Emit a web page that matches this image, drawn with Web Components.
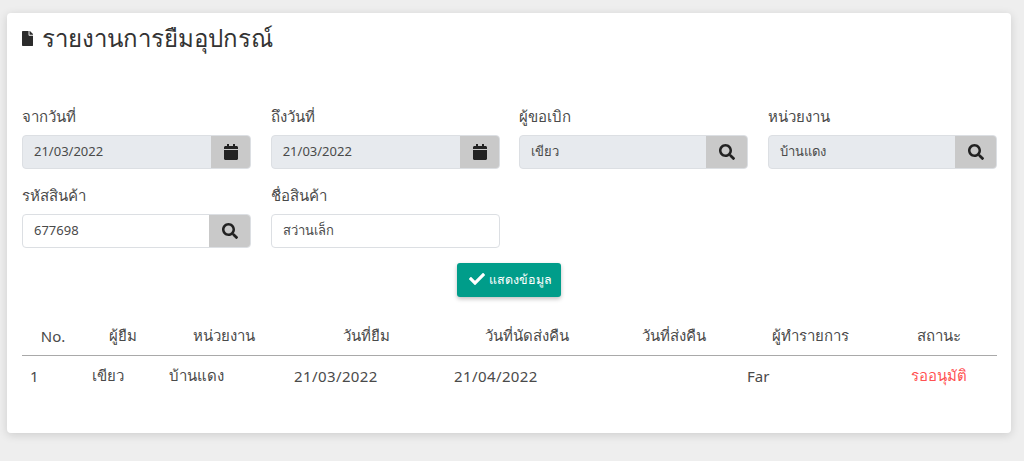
<!DOCTYPE html>
<html lang="th">
<head>
<meta charset="utf-8">
<title>รายงานการยืมอุปกรณ์</title>
<style>
    html, body { margin: 0; height: 461px; overflow: hidden; }
    body {
        background: #eeeeee;
        padding: 13px 13px 0 7px;
        box-sizing: border-box;
        font-family: "Noto Sans", "Open Sans", "Liberation Sans", sans-serif;
        color: #4a4a4a;
    }
</style>
</head>
<body>
<report-card>
    <report-title slot="title">รายงานการยืมอุปกรณ์</report-title>

    <form-field label="จากวันที่" value="21/03/2022" icon="calendar" disabled></form-field>
    <form-field label="ถึงวันที่" value="21/03/2022" icon="calendar" disabled></form-field>
    <form-field label="ผู้ขอเบิก" value="เขียว" icon="search" disabled></form-field>
    <form-field label="หน่วยงาน" value="บ้านแดง" icon="search" disabled></form-field>
    <form-field label="รหัสสินค้า" value="677698" icon="search"></form-field>
    <form-field label="ชื่อสินค้า" value="สว่านเล็ก"></form-field>

    <show-button slot="action">แสดงข้อมูล</show-button>
    <report-table slot="table"></report-table>
</report-card>

<script>
const ICONS = {
    file: ['0 0 384 512', 'M224 136V0H24C10.7 0 0 10.7 0 24v464c0 13.3 10.7 24 24 24h336c13.3 0 24-10.7 24-24V160H248c-13.2 0-24-10.8-24-24zm160-14.1v6.1H256V0h6.1c6.4 0 12.5 2.5 17 7l97.9 98c4.5 4.5 7 10.6 7 16.9z'],
    calendar: ['0 0 448 512', 'M12 192h424c6.6 0 12 5.4 12 12v260c0 26.5-21.5 48-48 48H48c-26.5 0-48-21.5-48-48V204c0-6.6 5.4-12 12-12zm436-44v-36c0-26.5-21.5-48-48-48h-48V12c0-6.6-5.4-12-12-12h-40c-6.6 0-12 5.4-12 12v52H160V12c0-6.6-5.4-12-12-12h-40c-6.6 0-12 5.4-12 12v52H48C21.5 64 0 85.5 0 112v36c0 6.6 5.4 12 12 12h424c6.6 0 12-5.4 12-12z'],
    search: ['0 0 512 512', 'M505 442.7L405.3 343c-4.5-4.5-10.6-7-17-7H372c27.6-35.3 44-79.7 44-128C416 93.1 322.9 0 208 0S0 93.1 0 208s93.1 208 208 208c48.3 0 92.7-16.4 128-44v16.3c0 6.4 2.5 12.5 7 17l99.7 99.7c9.4 9.4 24.6 9.4 33.9 0l28.3-28.3c9.4-9.4 9.4-24.6.1-34zM208 336c-70.7 0-128-57.2-128-128 0-70.7 57.2-128 128-128 70.7 0 128 57.2 128 128 0 70.7-57.2 128-128 128z'],
    check: ['0 0 512 512', 'M173.898 439.404l-166.4-166.4c-9.997-9.997-9.997-26.206 0-36.204l36.203-36.204c9.997-9.998 26.207-9.998 36.204 0L192 312.69 432.095 72.596c9.997-9.997 26.207-9.997 36.204 0l36.203 36.204c9.997 9.997 9.997 26.206 0 36.204l-294.4 294.401c-9.998 9.997-26.207 9.997-36.204-.001z']
};

function iconSvg(name, size) {
    const [box, d] = ICONS[name];
    return `<svg viewBox="${box}" height="${size}" fill="currentColor" aria-hidden="true"><path d="${d}"/></svg>`;
}

class ReportCard extends HTMLElement {
    constructor() {
        super();
        this.attachShadow({ mode: 'open' });
    }

    connectedCallback() {
        this.shadowRoot.innerHTML = `
            <style>
                :host {
                    display: block;
                    box-sizing: border-box;
                    width: 1004px;
                    height: 420px;
                    padding: 10px 14px 0 15px;
                    background: #fff;
                    border-radius: 4px;
                    box-shadow: 0 2px 10px rgba(0, 0, 0, 0.14);
                }
                .fields {
                    display: grid;
                    grid-template-columns: repeat(4, 1fr);
                    column-gap: 19.75px;
                    row-gap: 16px;
                    margin-top: 53px;
                }
                .action {
                    display: flex;
                    justify-content: center;
                    margin-top: 15px;
                    padding-right: 1px;
                }
            </style>
            <slot name="title"></slot>
            <div class="fields"><slot></slot></div>
            <div class="action"><slot name="action"></slot></div>
            <slot name="table"></slot>
        `;
    }
}

class ReportTitle extends HTMLElement {
    constructor() {
        super();
        this.attachShadow({ mode: 'open' });
    }

    connectedCallback() {
        this.shadowRoot.innerHTML = `
            <style>
                :host {
                    display: flex;
                    align-items: center;
                    gap: 9px;
                    height: 30px;
                    font-size: 24px;
                    color: #333;
                }
                svg { color: #2b2b2b; flex: none; }
            </style>
            ${iconSvg('file', 15)}
            <span><slot></slot></span>
        `;
    }
}

class FormField extends HTMLElement {
    constructor() {
        super();
        this.attachShadow({ mode: 'open' });
    }

    connectedCallback() {
        const icon = this.getAttribute('icon');
        const disabled = this.hasAttribute('disabled');

        this.shadowRoot.innerHTML = `
            <style>
                :host { display: block; }
                label {
                    display: block;
                    height: 21px;
                    line-height: 20px;
                    margin-bottom: 8px;
                    font-size: 15px;
                    color: #4a4a4a;
                }
                .box {
                    display: flex;
                    height: 34px;
                    box-sizing: border-box;
                    border: 1px solid #dcdfe3;
                    border-radius: 4px;
                    overflow: hidden;
                    background: ${disabled ? '#e7eaee' : '#fff'};
                }
                .value {
                    flex: 1;
                    padding-left: 11px;
                    line-height: 30px;
                    font-size: 13px;
                    color: #4a4a4a;
                }
                .btn {
                    flex: none;
                    width: ${icon === 'calendar' ? 40 : 42}px;
                    display: flex;
                    align-items: center;
                    justify-content: center;
                    margin: -1px -1px -1px 0;
                    background: #c9c9c9;
                    color: #222;
                }
            </style>
            <label>${this.getAttribute('label')}</label>
            <div class="box">
                <div class="value">${this.getAttribute('value')}</div>
                ${icon ? `<div class="btn">${iconSvg(icon, 16)}</div>` : ''}
            </div>
        `;
    }
}

class ShowButton extends HTMLElement {
    constructor() {
        super();
        this.attachShadow({ mode: 'open' });
    }

    connectedCallback() {
        this.shadowRoot.innerHTML = `
            <style>
                :host {
                    display: inline-flex;
                    align-items: center;
                    gap: 4px;
                    box-sizing: border-box;
                    width: 104px;
                    height: 34px;
                    padding-left: 12px;
                    background: #009d8a;
                    color: #fff;
                    font-size: 12.5px;
                    border-radius: 3px;
                    box-shadow: 0 2px 4px rgba(0, 0, 0, 0.25);
                }
                svg { flex: none; margin-top: -3px; }
            </style>
            ${iconSvg('check', 16)}
            <span><slot></slot></span>
        `;
    }
}

class ReportTable extends HTMLElement {
    constructor() {
        super();
        this.attachShadow({ mode: 'open' });
    }

    connectedCallback() {
        const widths = [62, 77, 125, 160, 162, 131, 142, 116];
        const heads = ['No.', 'ผู้ยืม', 'หน่วยงาน', 'วันที่ยืม', 'วันที่นัดส่งคืน', 'วันที่ส่งคืน', 'ผู้ทำรายการ', 'สถานะ'];
        const row = ['1', 'เขียว', 'บ้านแดง', '21/03/2022', '21/04/2022', '', 'Far', 'รออนุมัติ'];

        this.shadowRoot.innerHTML = `
            <style>
                :host { display: block; margin-top: 19px; font-size: 15px; }
                table { border-collapse: collapse; table-layout: fixed; width: 975px; }
                th, td { padding: 0 0 0 8px; }
                th {
                    height: 39px;
                    padding: 0;
                    font-weight: 400;
                    text-align: center;
                    color: #4a4a4a;
                    border-bottom: 1px solid #a9a9a9;
                }
                td { height: 40px; color: #4a4a4a; }
                td.date { letter-spacing: 0.4px; }
                td.status { padding: 0; text-align: center; color: #ff5252; }
            </style>
            <table>
                <colgroup>${widths.map(w => `<col style="width:${w}px">`).join('')}</colgroup>
                <thead><tr>${heads.map(h => `<th>${h}</th>`).join('')}</tr></thead>
                <tbody><tr>${row.map((c, i) => {
                    const cls = i === 7 ? ' class="status"' : (i === 3 || i === 4 ? ' class="date"' : '');
                    return `<td${cls}>${c}</td>`;
                }).join('')}</tr></tbody>
            </table>
        `;
    }
}

customElements.define('report-card', ReportCard);
customElements.define('report-title', ReportTitle);
customElements.define('form-field', FormField);
customElements.define('show-button', ShowButton);
customElements.define('report-table', ReportTable);
</script>
</body>
</html>
